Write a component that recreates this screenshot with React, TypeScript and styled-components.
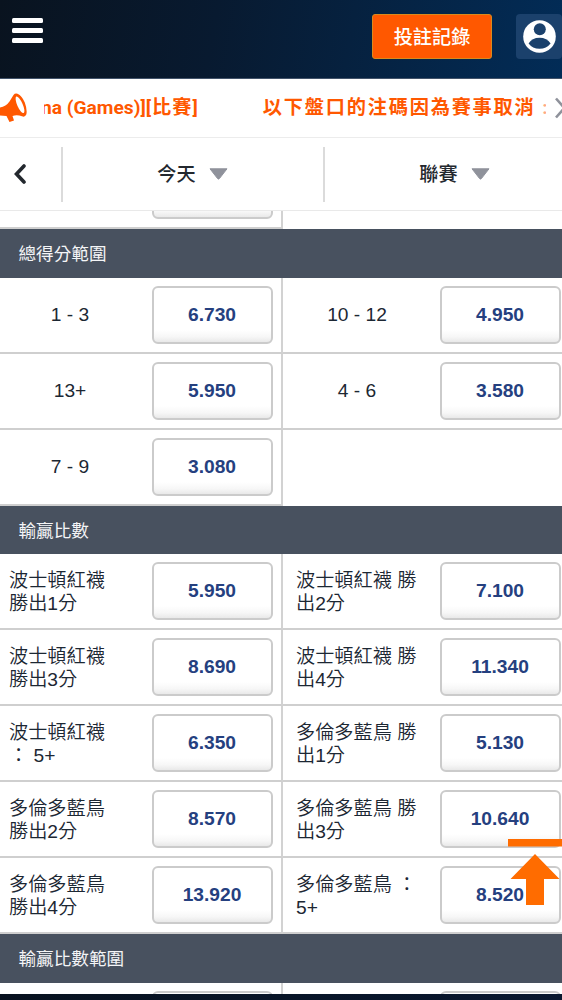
import React from "react";
import styled, { createGlobalStyle } from "styled-components";

const latin = `"Liberation Sans", "Noto Sans CJK TC", sans-serif`;
const cjk = `"Noto Sans CJK TC", "Liberation Sans", sans-serif`;

const GlobalStyle = createGlobalStyle`
  * { box-sizing: border-box; }
  body { margin: 0; background: #fff; }
`;

const Page = styled.div`
  position: relative;
  display: flex;
  flex-direction: column;
  width: 562px;
  height: 1000px;
  overflow: hidden;
  background: #fff;
  font-family: ${latin};
`;

const Header = styled.header`
  flex: none;
  display: flex;
  align-items: flex-start;
  height: 79px;
  padding: 14px 0 0 12px;
  border-bottom: 1px solid #42536a;
  background: linear-gradient(100deg, #09131f 0%, #081a30 38%, #06213f 62%, #022c57 100%);
`;

const MenuButton = styled.button`
  display: flex;
  flex-direction: column;
  gap: 5px;
  width: 31px;
  margin: 3.5px auto 0 0;
  padding: 0;
  border: 0;
  background: none;
`;

const MenuBar = styled.span`
  height: 5.3px;
  border-radius: 1.5px;
  background: #fff;
`;

const RecordsButton = styled.button`
  width: 120px;
  height: 45px;
  margin-right: 24px;
  padding: 0 0 2px;
  border: 1px solid #d98a1c;
  border-radius: 3px;
  background: #ff5800;
  color: #fff;
  font: 500 19.2px ${cjk};
`;

const AccountButton = styled.button`
  display: flex;
  align-items: center;
  justify-content: center;
  width: 46px;
  height: 45px;
  padding: 0;
  border: 0;
  border-radius: 4px;
  background: #1b416c;
`;

const News = styled.div`
  flex: none;
  display: flex;
  align-items: center;
  height: 59px;
  border-bottom: 1px solid #ececec;
  overflow: hidden;
`;

const Ticker = styled.div`
  flex: none;
  display: flex;
  align-items: center;
  width: 502px;
  height: 30px;
  margin-left: 17px;
  overflow: hidden;
  color: #ff5800;
  font: 700 19.2px/30px Roboto, ${cjk};
  white-space: pre;
`;

const TickerTail = styled.span`
  flex: none;
  margin-left: -3px;
`;

const Spaced = styled.span`
  letter-spacing: 1px;
`;

const TickerItem = styled.span`
  flex: none;
  margin-left: 64px;
  letter-spacing: 1.8px;
`;

const TickerFade = styled.span`
  opacity: 0.5;
`;

const NavBar = styled.nav`
  flex: none;
  display: flex;
  align-items: center;
  height: 73px;
  border-bottom: 1px solid #e9e9e9;
`;

const BackButton = styled.button`
  flex: none;
  display: flex;
  align-items: center;
  width: 61px;
  height: 55px;
  padding: 0 0 0 13px;
  border: 0;
  background: none;
`;

const Filter = styled.button`
  flex: none;
  display: flex;
  align-items: center;
  justify-content: center;
  gap: 13px;
  width: 262px;
  height: 55px;
  padding: 0 1px 2px 0;
  border: 0;
  border-left: 2px solid #dbdbdb;
  background: none;
  color: #23282e;
  font: 500 19.2px ${cjk};

  svg {
    margin-top: 2px;
  }
`;

const Markets = styled.main`
  flex: 1;
  min-height: 0;
  overflow: hidden;
`;

const Scrolled = styled.div`
  margin-top: -58px;
`;

const SectionTitle = styled.h2`
  display: flex;
  align-items: center;
  height: 48.5px;
  margin: 0;
  padding: 0 0 1px 18.5px;
  background: #48515f;
  color: #f4f5f7;
  font: 400 17.6px ${cjk};
`;

const Row = styled.div`
  display: flex;
  height: 76px;
`;

const Cell = styled.div<{ $side: "left" | "right"; $open?: boolean }>`
  display: flex;
  align-items: center;
  justify-content: space-between;
  width: ${(p) => (p.$side === "left" ? 283 : 279)}px;
  padding: ${(p) => (p.$side === "left" ? "0 8px 0 9px" : "0 1px 0 13px")};
  border-right: ${(p) => (p.$side === "left" ? "2px solid #d2d2d2" : "0")};
  border-bottom: 2px solid ${(p) => (p.$open ? "transparent" : "#cfcfcf")};
`;

const Label = styled.span<{ $center: boolean }>`
  width: 122px;
  padding-top: ${(p) => (p.$center ? 0 : 2)}px;
  color: #1c2733;
  font-size: 19.2px;
  font-weight: ${(p) => (p.$center ? 400 : 350)};
  line-height: 23px;
  text-align: ${(p) => (p.$center ? "center" : "left")};
  white-space: pre;
`;

const Odds = styled.button`
  flex: none;
  width: 121px;
  height: 58px;
  padding: 0 1px 0 0;
  border: 2px solid #cbcbcb;
  border-radius: 6px;
  background: linear-gradient(#fff 78%, #f7f7f7 90%, #e9e9e9 100%);
  color: #25407f;
  font: 700 19.2px ${latin};
`;

const FooterBar = styled.footer`
  flex: none;
  height: 6px;
  background: linear-gradient(90deg, #08121f, #0a1830);
`;

const BackToTop = styled.button`
  position: absolute;
  right: 0;
  top: 839px;
  width: 54px;
  height: 67px;
  padding: 0;
  border: 0;
  background: none;
`;

type Bet = [string, string];

const runRange: Bet[] = [
  ["1 - 3", "6.730"],
  ["10 - 12", "4.950"],
  ["13+", "5.950"],
  ["4 - 6", "3.580"],
  ["7 - 9", "3.080"],
];

const winMargin: Bet[] = [
  ["波士頓紅襪\n勝出1分", "5.950"],
  ["波士頓紅襪 勝\n出2分", "7.100"],
  ["波士頓紅襪\n勝出3分", "8.690"],
  ["波士頓紅襪 勝\n出4分", "11.340"],
  ["波士頓紅襪\n： 5+", "6.350"],
  ["多倫多藍鳥 勝\n出1分", "5.130"],
  ["多倫多藍鳥\n勝出2分", "8.570"],
  ["多倫多藍鳥 勝\n出3分", "10.640"],
  ["多倫多藍鳥\n勝出4分", "13.920"],
  ["多倫多藍鳥 ：\n5+", "8.520"],
];

function BetCell({ bet, side }: { bet?: Bet; side: "left" | "right" }) {
  if (!bet) return <Cell $side={side} $open />;
  return (
    <Cell $side={side}>
      <Label $center={!bet[0].includes("\n")}>{bet[0]}</Label>
      <Odds>{bet[1]}</Odds>
    </Cell>
  );
}

function BetRows({ bets }: { bets: Bet[] }) {
  const rows = [];
  for (let i = 0; i < bets.length; i += 2) {
    rows.push(
      <Row key={i}>
        <BetCell bet={bets[i]} side="left" />
        <BetCell bet={bets[i + 1]} side="right" />
      </Row>
    );
  }
  return <>{rows}</>;
}

const Caret = () => (
  <svg width="19" height="12" viewBox="0 0 19 12">
    <path d="M1 .8h17L10.4 10.6q-.9 1-1.800 0z" fill="#8f929b" stroke="#8f929b" strokeLinejoin="round" />
  </svg>
);

export default function App() {
  return (
    <Page>
      <GlobalStyle />
      <Header>
        <MenuButton aria-label="menu">
          <MenuBar />
          <MenuBar />
          <MenuBar />
        </MenuButton>
        <RecordsButton>投註記錄</RecordsButton>
        <AccountButton aria-label="account">
          <svg width="33" height="33" viewBox="0 0 33 33">
            <circle cx="16.5" cy="16.5" r="16.3" fill="#fff" />
            <circle cx="16.8" cy="9.3" r="6" fill="#1b416c" />
            <path d="M5.600 23.5Q9 17.8 16.5 17.8T27.6 23.5Q23.5 28.8 16.5 28.8T5.600 23.5Z" fill="#1b416c" />
          </svg>
        </AccountButton>
      </Header>

      <News>
        <svg width="27" height="32" viewBox="0 0 27 32">
          <path
            d="M0 15.500Q6 14.500 9.500 9.500L13.500 3Q15 1 17.500 1.800 22 4 24.800 10.500 27.500 18 26.300 22.500 25 25.500 22 24.300 17 22.500 12.500 24L14 28.500 9.500 30 6.500 24 0 23.500Z"
            fill="#ff5800"
          />
          <ellipse cx="20" cy="12.800" rx="2.700" ry="9" transform="rotate(-24 20 12.800)" fill="#fff" />
        </svg>
        <Ticker>
          <TickerTail>
            na (Games)]<Spaced>[比賽]</Spaced>
          </TickerTail>
          <TickerItem>
            以下盤口的注碼因為賽事取消<TickerFade> :</TickerFade>
          </TickerItem>
        </Ticker>
        <svg width="16" height="22" viewBox="0 0 16 22">
          <path d="M10 1.500 18.500 11 10 20.500" fill="none" stroke="#8f929b" strokeWidth="2.600" />
        </svg>
      </News>

      <NavBar>
        <BackButton aria-label="back">
          <svg width="14" height="20" viewBox="0 0 14 20">
            <path d="M11 2 3.500 10l7.500 8" fill="none" stroke="#23282e" strokeWidth="3.600" strokeLinecap="round" />
          </svg>
        </BackButton>
        <Filter>今天<Caret /></Filter>
        <Filter>聯賽<Caret /></Filter>
      </NavBar>

      <Markets>
        <Scrolled>
          <Row>
            <Cell $side="left">
              <Label $center />
              <Odds />
            </Cell>
            <Cell $side="right" $open />
          </Row>
          <SectionTitle>總得分範圍</SectionTitle>
          <BetRows bets={runRange} />
          <SectionTitle>輸贏比數</SectionTitle>
          <BetRows bets={winMargin} />
          <SectionTitle>輸贏比數範圍</SectionTitle>
          <BetRows bets={[["", ""], ["", ""]]} />
        </Scrolled>
      </Markets>
      <FooterBar />

      <BackToTop aria-label="top">
        <svg width="54" height="67" viewBox="0 0 54 67">
          <path d="M0 0h54v7.600H0zM27 15 51.500 40H36v26H18V40H2.500z" fill="#ff6c00" />
        </svg>
      </BackToTop>
    </Page>
  );
}
